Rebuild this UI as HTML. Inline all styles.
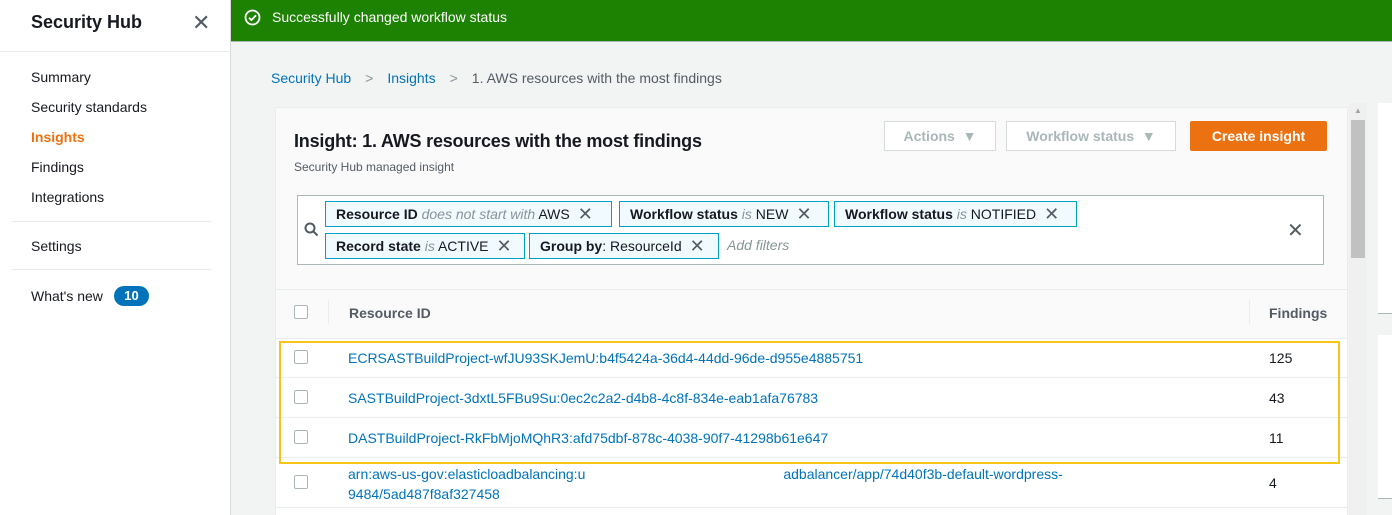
<!DOCTYPE html>
<html><head><meta charset="utf-8"><style>
*{box-sizing:border-box;margin:0;padding:0}
html,body{width:1392px;height:515px;overflow:hidden}
body{background:#f2f3f3;font-family:"Liberation Sans",sans-serif;font-size:14px;color:#16191f;position:relative}
.a{position:absolute;white-space:nowrap}
.side{left:0;top:0;width:231px;height:515px;background:#fff;border-right:1px solid #d5dbdb}
.nav{left:31px;font-size:14px;color:#16191f}
.hr{left:11px;width:200px;height:1px;background:#e9ebed}
.tok{height:26px;border:1px solid #00a1c9;background:#f1faff;padding:0 10px;line-height:24px;font-size:14px;color:#16191f}
.tok b{font-weight:bold}
.tok i{color:#879596}
.x{display:inline-block;margin-left:8px;font-size:18px;color:#545b64;vertical-align:top}
.row{left:276px;width:1071px;background:#fff;border-bottom:1px solid #eaeded}
.cb{width:14px;height:14px;border:1px solid #aab7b8;border-radius:2px;background:#fff}
.lnk{color:#0073bb;font-size:14px}
</style></head><body>
<div class="a side"></div>
<div class="a" style="left:31px;top:12px;font-size:18px;font-weight:bold">Security Hub</div>
<div class="a" style="left:192px;top:10px;font-size:22px;color:#545b64">✕</div>
<div class="a hr" style="left:0;width:231px;top:51px"></div>
<div class="a nav" style="top:69px">Summary</div>
<div class="a nav" style="top:99px">Security standards</div>
<div class="a nav" style="top:129px;color:#ec7211;font-weight:bold">Insights</div>
<div class="a nav" style="top:159px">Findings</div>
<div class="a nav" style="top:189px">Integrations</div>
<div class="a hr" style="top:221px"></div>
<div class="a nav" style="top:238px">Settings</div>
<div class="a hr" style="top:269px"></div>
<div class="a nav" style="top:288px">What's new</div>
<div class="a" style="left:114px;top:286px;width:35px;height:20px;border-radius:10px;background:#0073bb;color:#fff;font-size:13px;font-weight:bold;text-align:center;line-height:20px">10</div>

<div class="a" style="left:231px;top:0;width:1161px;height:42px;background:#1d8102;border-bottom:1px solid #aab7b8"></div>
<svg class="a" style="left:244px;top:9px" width="17" height="17" viewBox="0 0 17 17"><circle cx="8.5" cy="8.5" r="7" fill="none" stroke="#fff" stroke-width="1.8"/><path d="M5 8.7l2.4 2.4 4.6-4.8" fill="none" stroke="#fff" stroke-width="1.8"/></svg>
<div class="a" style="left:272px;top:9px;color:#fff;font-size:14px">Successfully changed workflow status</div>

<div class="a" style="left:271px;top:70px;font-size:14px"><span style="color:#0073bb">Security Hub</span><span style="color:#879596;margin:0 14px">&gt;</span><span style="color:#0073bb">Insights</span><span style="color:#879596;margin:0 14px">&gt;</span><span style="color:#545b64">1. AWS resources with the most findings</span></div>

<div class="a" style="left:275px;top:107px;width:1073px;height:410px;background:#fafafa;border:1px solid #eaeded"></div>
<div class="a" style="left:294px;top:131px;font-size:18px;font-weight:bold;letter-spacing:-0.2px">Insight: 1. AWS resources with the most findings</div>
<div class="a" style="left:294px;top:160px;font-size:12px;color:#545b64">Security Hub managed insight</div>
<div class="a" style="left:884px;top:121px;width:112px;height:30px;border:1px solid #d5dbdb;background:#fff;color:#aab7b8;font-weight:bold;text-align:center;line-height:28px">Actions &nbsp;▼</div>
<div class="a" style="left:1006px;top:121px;width:170px;height:30px;border:1px solid #d5dbdb;background:#fff;color:#aab7b8;font-weight:bold;text-align:center;line-height:28px">Workflow status &nbsp;▼</div>
<div class="a" style="left:1190px;top:121px;width:137px;height:30px;background:#ec7211;border-radius:2px;color:#fff;font-weight:bold;text-align:center;line-height:30px">Create insight</div>

<div class="a" style="left:297px;top:195px;width:1027px;height:70px;background:#fff;border:1px solid #aab7b8"></div>
<svg class="a" style="left:304px;top:222px" width="15" height="15" viewBox="0 0 15 15"><circle cx="6" cy="6" r="4.5" fill="none" stroke="#545b64" stroke-width="2"/><path d="M9.5 9.5l4 4" stroke="#545b64" stroke-width="2"/></svg>
<div class="a tok" style="left:325px;top:201px;width:287px"><b>Resource ID</b> <i>does not start with</i> AWS<span class="x">✕</span></div>
<div class="a tok" style="left:619px;top:201px;width:210px"><b>Workflow status</b> <i>is</i> NEW<span class="x">✕</span></div>
<div class="a tok" style="left:834px;top:201px;width:243px"><b>Workflow status</b> <i>is</i> NOTIFIED<span class="x">✕</span></div>
<div class="a tok" style="left:325px;top:233px;width:200px"><b>Record state</b> <i>is</i> ACTIVE<span class="x">✕</span></div>
<div class="a tok" style="left:529px;top:233px;width:190px"><b>Group by</b>: ResourceId<span class="x">✕</span></div>
<div class="a" style="left:727px;top:237px;color:#879596;font-style:italic">Add filters</div>
<div class="a" style="left:1287px;top:218px;font-size:20px;color:#545b64">✕</div>

<div class="a" style="left:276px;top:289px;width:1071px;height:1px;background:#eaeded"></div>
<div class="a cb" style="left:294px;top:305px"></div>
<div class="a" style="left:328px;top:300px;width:1px;height:24px;background:#eaeded"></div>
<div class="a" style="left:349px;top:305px;font-weight:bold;color:#545b64">Resource ID</div>
<div class="a" style="left:1249px;top:300px;width:1px;height:24px;background:#eaeded"></div>
<div class="a" style="left:1269px;top:305px;font-weight:bold;color:#545b64">Findings</div>

<div class="a row" style="top:338px;height:40px;border-top:1px solid #eaeded"></div>
<div class="a row" style="top:378px;height:40px"></div>
<div class="a row" style="top:418px;height:40px"></div>
<div class="a row" style="top:458px;height:50px"></div>
<div class="a row" style="top:508px;height:10px"></div>
<div class="a cb" style="left:294px;top:350px"></div>
<div class="a lnk" style="left:348px;top:350px">ECRSASTBuildProject-wfJU93SKJemU:b4f5424a-36d4-44dd-96de-d955e4885751</div>
<div class="a" style="left:1269px;top:350px">125</div>
<div class="a cb" style="left:294px;top:390px"></div>
<div class="a lnk" style="left:348px;top:390px">SASTBuildProject-3dxtL5FBu9Su:0ec2c2a2-d4b8-4c8f-834e-eab1afa76783</div>
<div class="a" style="left:1269px;top:390px">43</div>
<div class="a cb" style="left:294px;top:430px"></div>
<div class="a lnk" style="left:348px;top:430px">DASTBuildProject-RkFbMjoMQhR3:afd75dbf-878c-4038-90f7-41298b61e647</div>
<div class="a" style="left:1269px;top:430px">11</div>
<div class="a cb" style="left:294px;top:475px"></div>
<div class="a lnk" style="left:348px;top:466px">arn:aws-us-gov:elasticloadbalancing:u<span style="display:inline-block;width:198px"></span>adbalancer/app/74d40f3b-default-wordpress-</div>
<div class="a lnk" style="left:348px;top:486px">9484/5ad487f8af327458</div>
<div class="a" style="left:1269px;top:475px">4</div>
<div class="a" style="left:279px;top:341px;width:1061px;height:123px;border:2px solid #f7c517"></div>

<div class="a" style="left:1349px;top:103px;width:18px;height:412px;background:#f0f0f0"></div>
<div class="a" style="left:1351px;top:120px;width:14px;height:138px;background:#c1c1c1"></div>
<div class="a" style="left:1354px;top:106px;font-size:8px;color:#a3a3a3">▲</div>
<div class="a" style="left:1378px;top:103px;width:14px;height:211px;background:#fff;border-bottom:1px solid #aab7b8"></div>
<div class="a" style="left:1378px;top:335px;width:14px;height:164px;background:#fff;border-bottom:1px solid #aab7b8"></div>
</body></html>
